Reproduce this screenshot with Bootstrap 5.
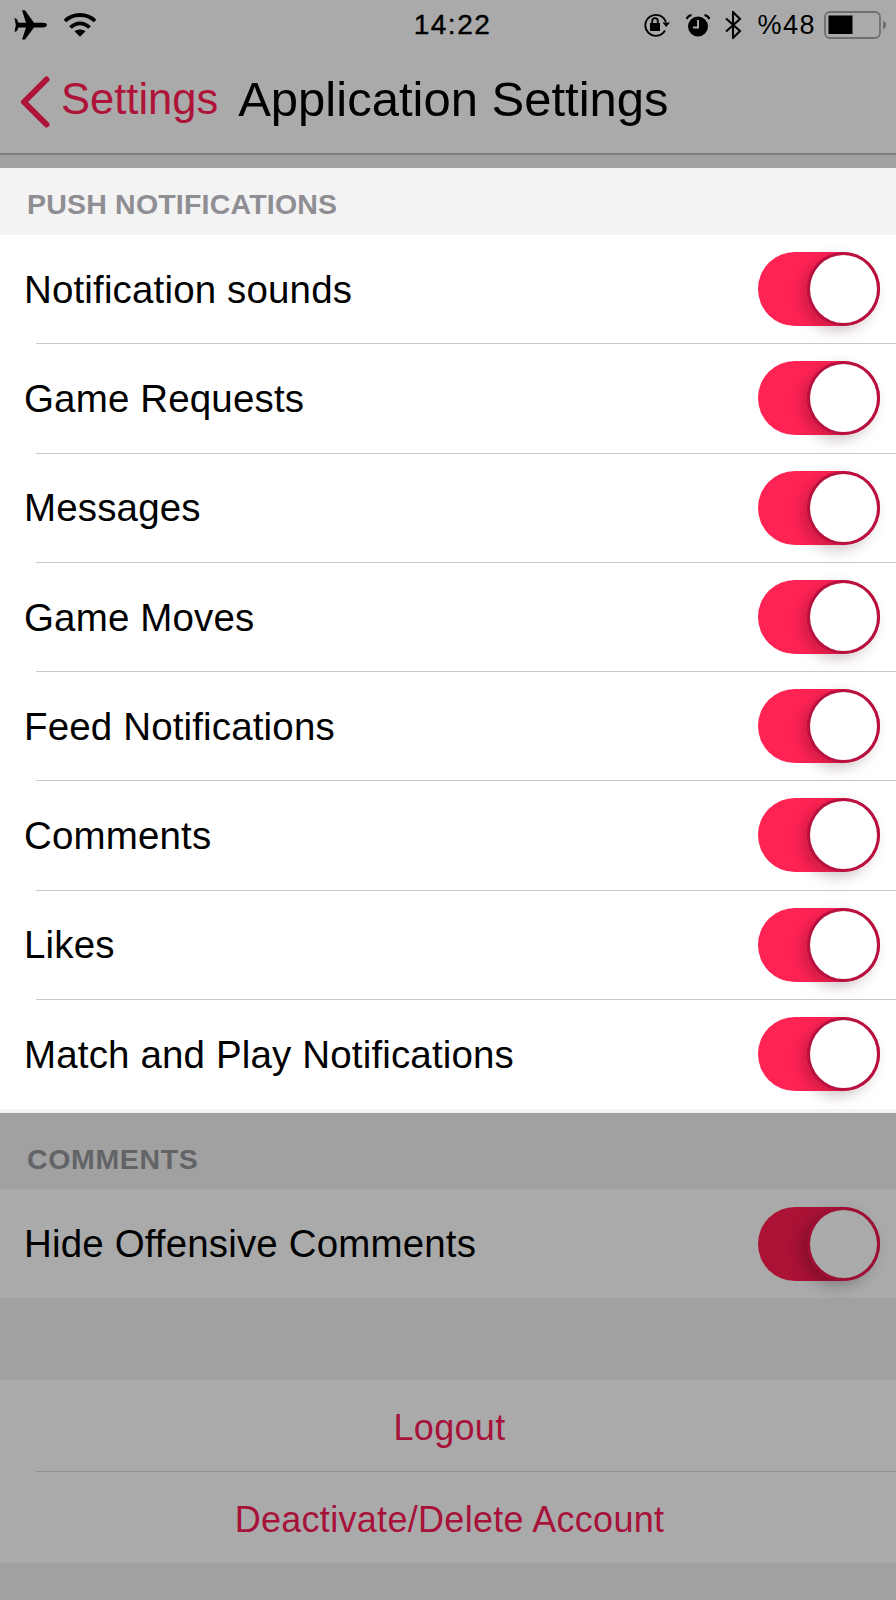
<!DOCTYPE html>
<html lang="en">
<head>
<meta charset="UTF-8">
<meta name="viewport" content="width=device-width, initial-scale=1.0">
<title>Application Settings</title>
<link href="https://cdn.jsdelivr.net/npm/bootstrap@5.3.0/dist/css/bootstrap.min.css" rel="stylesheet">
<style>
body {
    width: 896px;
    height: 1600px;
    overflow: hidden;
    background-color: #a1a1a1;
    font-family: "Liberation Sans", Arial, sans-serif;
    color: #000;
}
.top-area { background-color: #aaa; height: 153px; }
.status-bar { height: 50px; padding: 0 10px 0 14px; }
.status-side { flex: 1 1 0; }
.status-time { font-size: 28px; font-weight: 500; letter-spacing: 1.5px; margin-left: 5px; -webkit-text-stroke: .4px #000; }
.status-pct { font-size: 27px; letter-spacing: 1.5px; margin-left: 15px; margin-right: 8px; }
.alarm-icon { margin-left: 16px; margin-right: 15px; }
.title-bar { height: 103px; padding-left: 20px; padding-top: 1px; }
.back-label { font-size: 43.5px; color: #ae1439; margin-left: 11px; margin-bottom: 4px; }
.page-title { font-size: 49px; margin-left: 20px; font-weight: 400; margin-bottom: 6px; }
.title-rule { height: 2px; background-color: #7f7f7f; }
.title-gap { height: 13px; }
.section-head {
    height: 67px;
    background-color: #f3f3f3;
    color: #8e8e93;
    font-size: 28.5px;
    font-weight: 700;
    letter-spacing: .2px;
    padding-left: 27px;
    padding-top: 6px;
}
.set-list { background-color: #fff; border-radius: 0; }
.set-row {
    height: 108.25px;
    padding: 0 16px 0 24px;
    font-size: 38.5px;
    letter-spacing: .15px;
}
.row-label { margin-top: 1px; }
.row-sep { height: 1px; margin-left: 36px; background-color: #c8c8c8; }
.white-end { height: 4px; background-color: #f3f3f3; }
.sw-track {
    display: block;
    position: relative;
    width: 122px;
    height: 74px;
    border-radius: 37px;
    background-color: #ff2354;
}
.sw-thumb {
    position: absolute;
    top: 0;
    right: 0;
    width: 73px;
    height: 74px;
    border-radius: 50%;
    background-color: #fff;
    border: 3px solid #b8103f;
    box-shadow: -6px 5px 14px rgba(60, 0, 20, .24);
}
.dim-part .section-head { height: 76px; background-color: #a1a1a1; color: #636468; padding-top: 17px; letter-spacing: .65px; }
.dim-part .set-list { background-color: #aaa; }
.dim-part .set-row { height: 109px; }
.dim-part .sw-track { background-color: #ab1236; }
.dim-part .sw-thumb { background-color: #aaa; border-color: #9d0f33; box-shadow: -6px 5px 14px rgba(30, 0, 10, .26); }
.gap-band { height: 82px; }
.action-row {
    height: 91px;
    font-size: 36px;
    letter-spacing: .3px;
    color: #a6123a;
    padding-top: 4px;
    padding-left: 3px;
}
.dim-sep { height: 1px; margin-left: 36px; background-color: #8f8f8f; }
</style>
</head>
<body>
    <header class="top-area">
        <div class="status-bar d-flex align-items-center">
            <div class="status-side d-flex align-items-center">
                <svg width="33" height="30" viewBox="0 0 33 30" fill="#000"><path d="M33 15 C33 13.500 31 12.800 29 12.800 L20 12.800 L11 0.300 L8 0.300 L12 12.800 L4.500 12.800 L2.800 9 L0.500 8 L1.800 15 L0.500 22 L2.800 21 L4.500 17.500 L12 17.500 L8 29.500 L11 29.500 L20 17.500 L29 17.500 C31 17.500 33 16.500 33 15 Z"/></svg>
                <svg class="ms-3" width="34" height="24" viewBox="0 0 34 24" fill="none" stroke="#000" stroke-width="3.800"><path d="M2 8 C10 0 24 0 32 8"/><path d="M7.500 14.500 C13 9 21 9 26.500 14.500"/><path d="M17 23.800 L11.500 18.200 C14.500 16 19.500 16 22.500 18.200 Z" fill="#000" stroke="none"/></svg>
            </div>
            <div class="status-time">14:22</div>
            <div class="status-side d-flex align-items-center justify-content-end">
                <svg width="27" height="25" viewBox="0 0 27 25" fill="none" stroke="#000" stroke-width="1.800"><path d="M22 17.500 A10.500 10.500 0 1 1 22.800 9"/><path d="M19.500 9.500 L27 9.500 L23.200 14 Z" fill="#000" stroke="none"/><rect x="7" y="10" width="10" height="8" fill="#000" stroke="none"/><path d="M9.200 11 V8 A2.800 2.800 0 0 1 14.800 8 V11"/></svg>
                <svg class="alarm-icon" width="24" height="23" viewBox="0 0 24 23"><circle cx="12" cy="12.500" r="10" fill="#000"/><path d="M12 6 V13.500 H7" fill="none" stroke="#aaa" stroke-width="2"/><path d="M0.500 5 C1.500 2.500 3 1.500 5.500 1 M23.500 5 C22.500 2.500 21 1.500 18.500 1" fill="none" stroke="#000" stroke-width="2.200"/></svg>
                <svg width="17" height="28" viewBox="0 0 17 28" fill="none" stroke="#000" stroke-width="2.100"><path d="M1 7.500 L15 20 L8 27 V1 L15 8 L1 20.500"/></svg>
                <span class="status-pct">%48</span>
                <svg width="62" height="28" viewBox="0 0 62 28"><rect x="1" y="1" width="55" height="26" rx="5" fill="none" stroke="#6f6f6f" stroke-width="1.800"/><rect x="4.500" y="4.500" width="24" height="18.500" fill="#000"/><path d="M59 9.500 L62 12 V16 L59 18.500 Z" fill="#6f6f6f"/></svg>
            </div>
        </div>
        <div class="title-bar d-flex align-items-center">
            <svg width="30" height="52" viewBox="0 0 30 52" fill="none" stroke="#ae1439" stroke-width="6" stroke-linecap="round" stroke-linejoin="round"><path d="M26.500 3.500 L4 26 L26.500 48.500"/></svg>
            <span class="back-label">Settings</span>
            <h1 class="page-title">Application Settings</h1>
        </div>
    </header>
    <div class="title-rule"></div>
    <div class="title-gap"></div>

    <section>
        <div class="section-head d-flex align-items-center">PUSH NOTIFICATIONS</div>
        <div class="set-list">
            <div class="set-row d-flex align-items-center justify-content-between"><span class="row-label">Notification sounds</span><span class="sw-track"><span class="sw-thumb"></span></span></div>
            <div class="row-sep"></div>
            <div class="set-row d-flex align-items-center justify-content-between"><span class="row-label">Game Requests</span><span class="sw-track"><span class="sw-thumb"></span></span></div>
            <div class="row-sep"></div>
            <div class="set-row d-flex align-items-center justify-content-between"><span class="row-label">Messages</span><span class="sw-track"><span class="sw-thumb"></span></span></div>
            <div class="row-sep"></div>
            <div class="set-row d-flex align-items-center justify-content-between"><span class="row-label">Game Moves</span><span class="sw-track"><span class="sw-thumb"></span></span></div>
            <div class="row-sep"></div>
            <div class="set-row d-flex align-items-center justify-content-between"><span class="row-label">Feed Notifications</span><span class="sw-track"><span class="sw-thumb"></span></span></div>
            <div class="row-sep"></div>
            <div class="set-row d-flex align-items-center justify-content-between"><span class="row-label">Comments</span><span class="sw-track"><span class="sw-thumb"></span></span></div>
            <div class="row-sep"></div>
            <div class="set-row d-flex align-items-center justify-content-between"><span class="row-label">Likes</span><span class="sw-track"><span class="sw-thumb"></span></span></div>
            <div class="row-sep"></div>
            <div class="set-row d-flex align-items-center justify-content-between"><span class="row-label">Match and Play Notifications</span><span class="sw-track"><span class="sw-thumb"></span></span></div>
            <div class="row-sep bg-white"></div>
        </div>
        <div class="white-end"></div>
    </section>

    <section class="dim-part">
        <div class="section-head d-flex align-items-center">COMMENTS</div>
        <div class="set-list">
            <div class="set-row d-flex align-items-center justify-content-between"><span class="row-label">Hide Offensive Comments</span><span class="sw-track"><span class="sw-thumb"></span></span></div>
        </div>
        <div class="gap-band"></div>
        <div class="set-list">
            <div class="action-row d-flex align-items-center justify-content-center">Logout</div>
            <div class="dim-sep"></div>
            <div class="action-row d-flex align-items-center justify-content-center">Deactivate/Delete Account</div>
        </div>
    </section>
    <script src="https://cdn.jsdelivr.net/npm/bootstrap@5.3.0/dist/js/bootstrap.bundle.min.js"></script>
</body>
</html>
